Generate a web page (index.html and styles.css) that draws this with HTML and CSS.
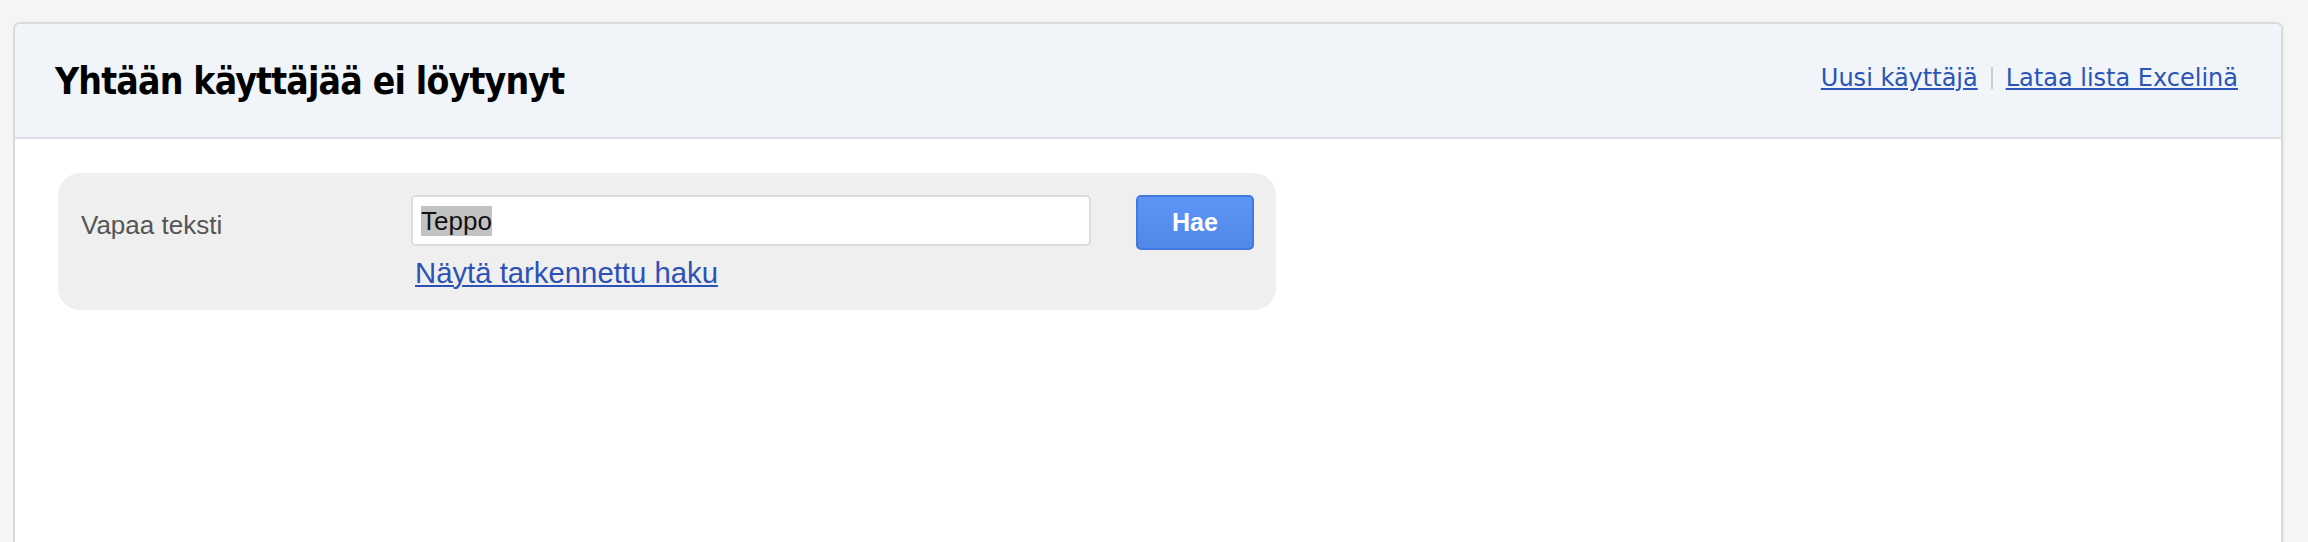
FILE: index.html
```html
<!DOCTYPE html>
<html lang="fi">
<head>
<meta charset="utf-8">
<title>Käyttäjät</title>
<link rel="stylesheet" href="styles.css">
</head>
<body>
<div class="page">
  <div class="card">
    <div class="card-header">
      <h1 class="title">Yhtään käyttäjää ei löytynyt</h1>
      <div class="actions">
        <a href="#" class="action-link">Uusi käyttäjä</a>
        <span class="sep"></span>
        <a href="#" class="action-link">Lataa lista Excelinä</a>
      </div>
    </div>
    <div class="card-body">
      <form class="search">
        <label class="search-label">Vapaa teksti</label>
        <div class="search-field">
          <div class="text-input"><span class="selected">Teppo</span></div>
          <a href="#" class="advanced-link">Näytä tarkennettu haku</a>
        </div>
        <button type="button" class="search-btn">Hae</button>
      </form>
    </div>
  </div>
</div>
</body>
</html>
```

FILE: styles.css
```css
html, body {
  margin: 0;
  padding: 0;
  background: #f5f5f5;
  height: 100%;
  overflow: hidden;
}

.page {
  box-sizing: border-box;
  height: 100vh;
  padding: 22px 25px 0 13px;
  display: flex;
  flex-direction: column;
}

.card {
  flex: 1;
  background: #ffffff;
  border: 2px solid #dadada;
  border-bottom: none;
  border-radius: 7px 7px 0 0;
  box-shadow: 1px 0 2px rgba(0, 0, 0, 0.05);
}

.card-header {
  display: flex;
  align-items: center;
  justify-content: space-between;
  height: 113px;
  padding: 0 43px 0 40px;
  background: #f1f4f9;
  border-bottom: 2px solid #dcdfe6;
  border-radius: 5px 5px 0 0;
}

.title {
  margin: 0;
  padding-top: 2px;
  font-family: "DejaVu Sans Condensed", "DejaVu Sans", sans-serif;
  font-stretch: condensed;
  font-weight: bold;
  font-size: 37px;
  letter-spacing: -0.8px;
  color: #000000;
}

.actions {
  display: flex;
  align-items: center;
  padding-bottom: 6px;
  font-family: "DejaVu Sans", Verdana, sans-serif;
  font-size: 24px;
}

.action-link {
  color: #2a54b6;
  text-decoration: underline;
  text-underline-offset: 2px;
}

.sep {
  display: inline-block;
  width: 2px;
  height: 22px;
  margin: 0 13px;
  background: #cccccc;
}

.card-body {
  padding: 34px 43px 0 43px;
}

.search {
  display: grid;
  grid-template-columns: 330px 725px 118px;
  align-items: start;
  width: 1218px;
  box-sizing: border-box;
  padding: 22px 22px 21px 23px;
  background: #efefef;
  border-radius: 22px;
  font-family: "Liberation Sans", Arial, sans-serif;
}

.search-label {
  margin-top: 15px;
  font-size: 26px;
  line-height: 30px;
  color: #555555;
}

.search-field {
  display: flex;
  flex-direction: column;
  align-items: flex-start;
  width: 680px;
}

.text-input {
  display: flex;
  align-items: center;
  box-sizing: border-box;
  width: 680px;
  height: 51px;
  padding: 0 8px;
  background: #ffffff;
  border: 2px solid #dcdcdc;
  border-radius: 5px;
  font-size: 26px;
  line-height: 30px;
  color: #111111;
}

.selected {
  background: #c2c2c2;
}

.advanced-link {
  margin: 10px 0 0 4px;
  font-size: 29.3px;
  line-height: 33px;
  color: #2c52b8;
  text-decoration: underline;
  text-decoration-thickness: 2px;
  text-underline-offset: 2px;
}

.search-btn {
  box-sizing: border-box;
  width: 118px;
  height: 55px;
  padding: 0;
  background: linear-gradient(#5d95f7, #5088e8);
  border: 2px solid #4279e1;
  border-radius: 5px;
  color: #ffffff;
  font-family: "Liberation Sans", Arial, sans-serif;
  font-weight: bold;
  font-size: 25px;
}
```
